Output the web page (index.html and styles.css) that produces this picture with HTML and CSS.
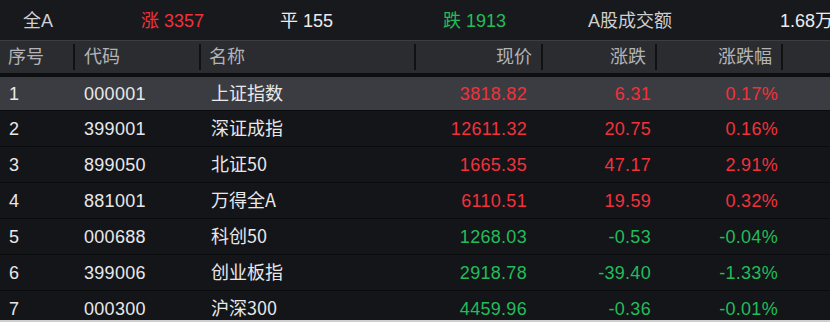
FILE: index.html
```html
<!DOCTYPE html>
<html lang="zh">
<head>
<meta charset="utf-8">
<title>行情</title>
<link rel="stylesheet" href="styles.css">
</head>
<body>
<div class="app">
  <div class="summary">
    <span class="s-item light">全A</span>
    <span class="s-item up">涨 3357</span>
    <span class="s-item white">平 155</span>
    <span class="s-item down">跌 1913</span>
    <span class="s-item light">A股成交额</span>
    <span class="s-item white">1.68万</span>
  </div>
  <div class="thead">
    <div class="th">序号</div>
    <div class="th">代码</div>
    <div class="th">名称</div>
    <div class="th r">现价</div>
    <div class="th r">涨跌</div>
    <div class="th r">涨跌幅</div>
    <div class="th last"></div>
  </div>
  <div class="tbody">
    <div class="row sel">
      <div class="c idx">1</div><div class="c code">000001</div><div class="c name">上证指数</div>
      <div class="c price up">3818.82</div><div class="c chg up">6.31</div><div class="c pct up">0.17%</div><div class="c"></div>
    </div>
    <div class="row">
      <div class="c idx">2</div><div class="c code">399001</div><div class="c name">深证成指</div>
      <div class="c price up">12611.32</div><div class="c chg up">20.75</div><div class="c pct up">0.16%</div><div class="c"></div>
    </div>
    <div class="row">
      <div class="c idx">3</div><div class="c code">899050</div><div class="c name">北证50</div>
      <div class="c price up">1665.35</div><div class="c chg up">47.17</div><div class="c pct up">2.91%</div><div class="c"></div>
    </div>
    <div class="row">
      <div class="c idx">4</div><div class="c code">881001</div><div class="c name">万得全A</div>
      <div class="c price up">6110.51</div><div class="c chg up">19.59</div><div class="c pct up">0.32%</div><div class="c"></div>
    </div>
    <div class="row">
      <div class="c idx">5</div><div class="c code">000688</div><div class="c name">科创50</div>
      <div class="c price down">1268.03</div><div class="c chg down">-0.53</div><div class="c pct down">-0.04%</div><div class="c"></div>
    </div>
    <div class="row">
      <div class="c idx">6</div><div class="c code">399006</div><div class="c name">创业板指</div>
      <div class="c price down">2918.78</div><div class="c chg down">-39.40</div><div class="c pct down">-1.33%</div><div class="c"></div>
    </div>
    <div class="row">
      <div class="c idx">7</div><div class="c code">000300</div><div class="c name">沪深300</div>
      <div class="c price down">4459.96</div><div class="c chg down">-0.36</div><div class="c pct down">-0.01%</div><div class="c"></div>
    </div>
  </div>
</div>
</body>
</html>
```

FILE: styles.css
```css
html, body {
  margin: 0;
  padding: 0;
  background: #cfcfd1;
}
body {
  font-family: "Liberation Sans", "Noto Sans CJK SC", sans-serif;
  font-size: 18px;
  width: 830px;
  height: 322px;
  overflow: hidden;
}
.app {
  width: 830px;
  height: 320px;
  overflow: hidden;
  background: #141519;
}
.summary {
  height: 40px;
  background: #18191d;
  display: grid;
  grid-template-columns: 118px 139px 163px 145px 192px auto;
  align-items: center;
  padding-left: 23px;
  white-space: nowrap;
  overflow: hidden;
  padding-top: 1px;
  box-sizing: border-box;
}
.s-item { line-height: 20px; }
.light { color: #cfd0d2; }
.white { color: #ececee; }
.up { color: #f2313b; }
.down { color: #21bd5a; }

.thead, .row {
  display: grid;
  grid-template-columns: 75px 126px 215px 127px 114px 126px 1fr;
}
.thead {
  background: #2b2c30;
  border-top: 1px solid #3d3e43;
  border-bottom: 4px solid #0d0e10;
  padding: 3px 0;
  height: 26px;
}
.th {
  color: #b3b4b7;
  border-right: 2px solid #101113;
  line-height: 26px;
  padding: 0 0 0 8px;
  box-sizing: border-box;
  white-space: nowrap;
}
.th:nth-child(2) { padding-left: 9px; }
.th:nth-child(3) { padding-left: 8px; }
.th.r { text-align: right; padding: 0 9px 0 0; }
.th.last { border-right: none; }

.row {
  height: 35px;
  border-bottom: 1px solid #0a0b0d;
  align-items: center;
  color: #e8e8ea;
  letter-spacing: 0.3px;
}
.row.sel {
  background: #3a3c41;
  height: 33px;
}
.c { white-space: nowrap; line-height: 22px; }
.idx { padding-left: 9px; }
.code { padding-left: 9px; }
.name {
  padding-left: 10px;
  letter-spacing: 0;
  font-family: "Noto Sans CJK SC", sans-serif;
  line-height: 24px;
  margin-top: -3px;
}
.price { text-align: right; padding-right: 16px; }
.chg { text-align: right; padding-right: 6px; }
.pct { text-align: right; padding-right: 5px; }
```
